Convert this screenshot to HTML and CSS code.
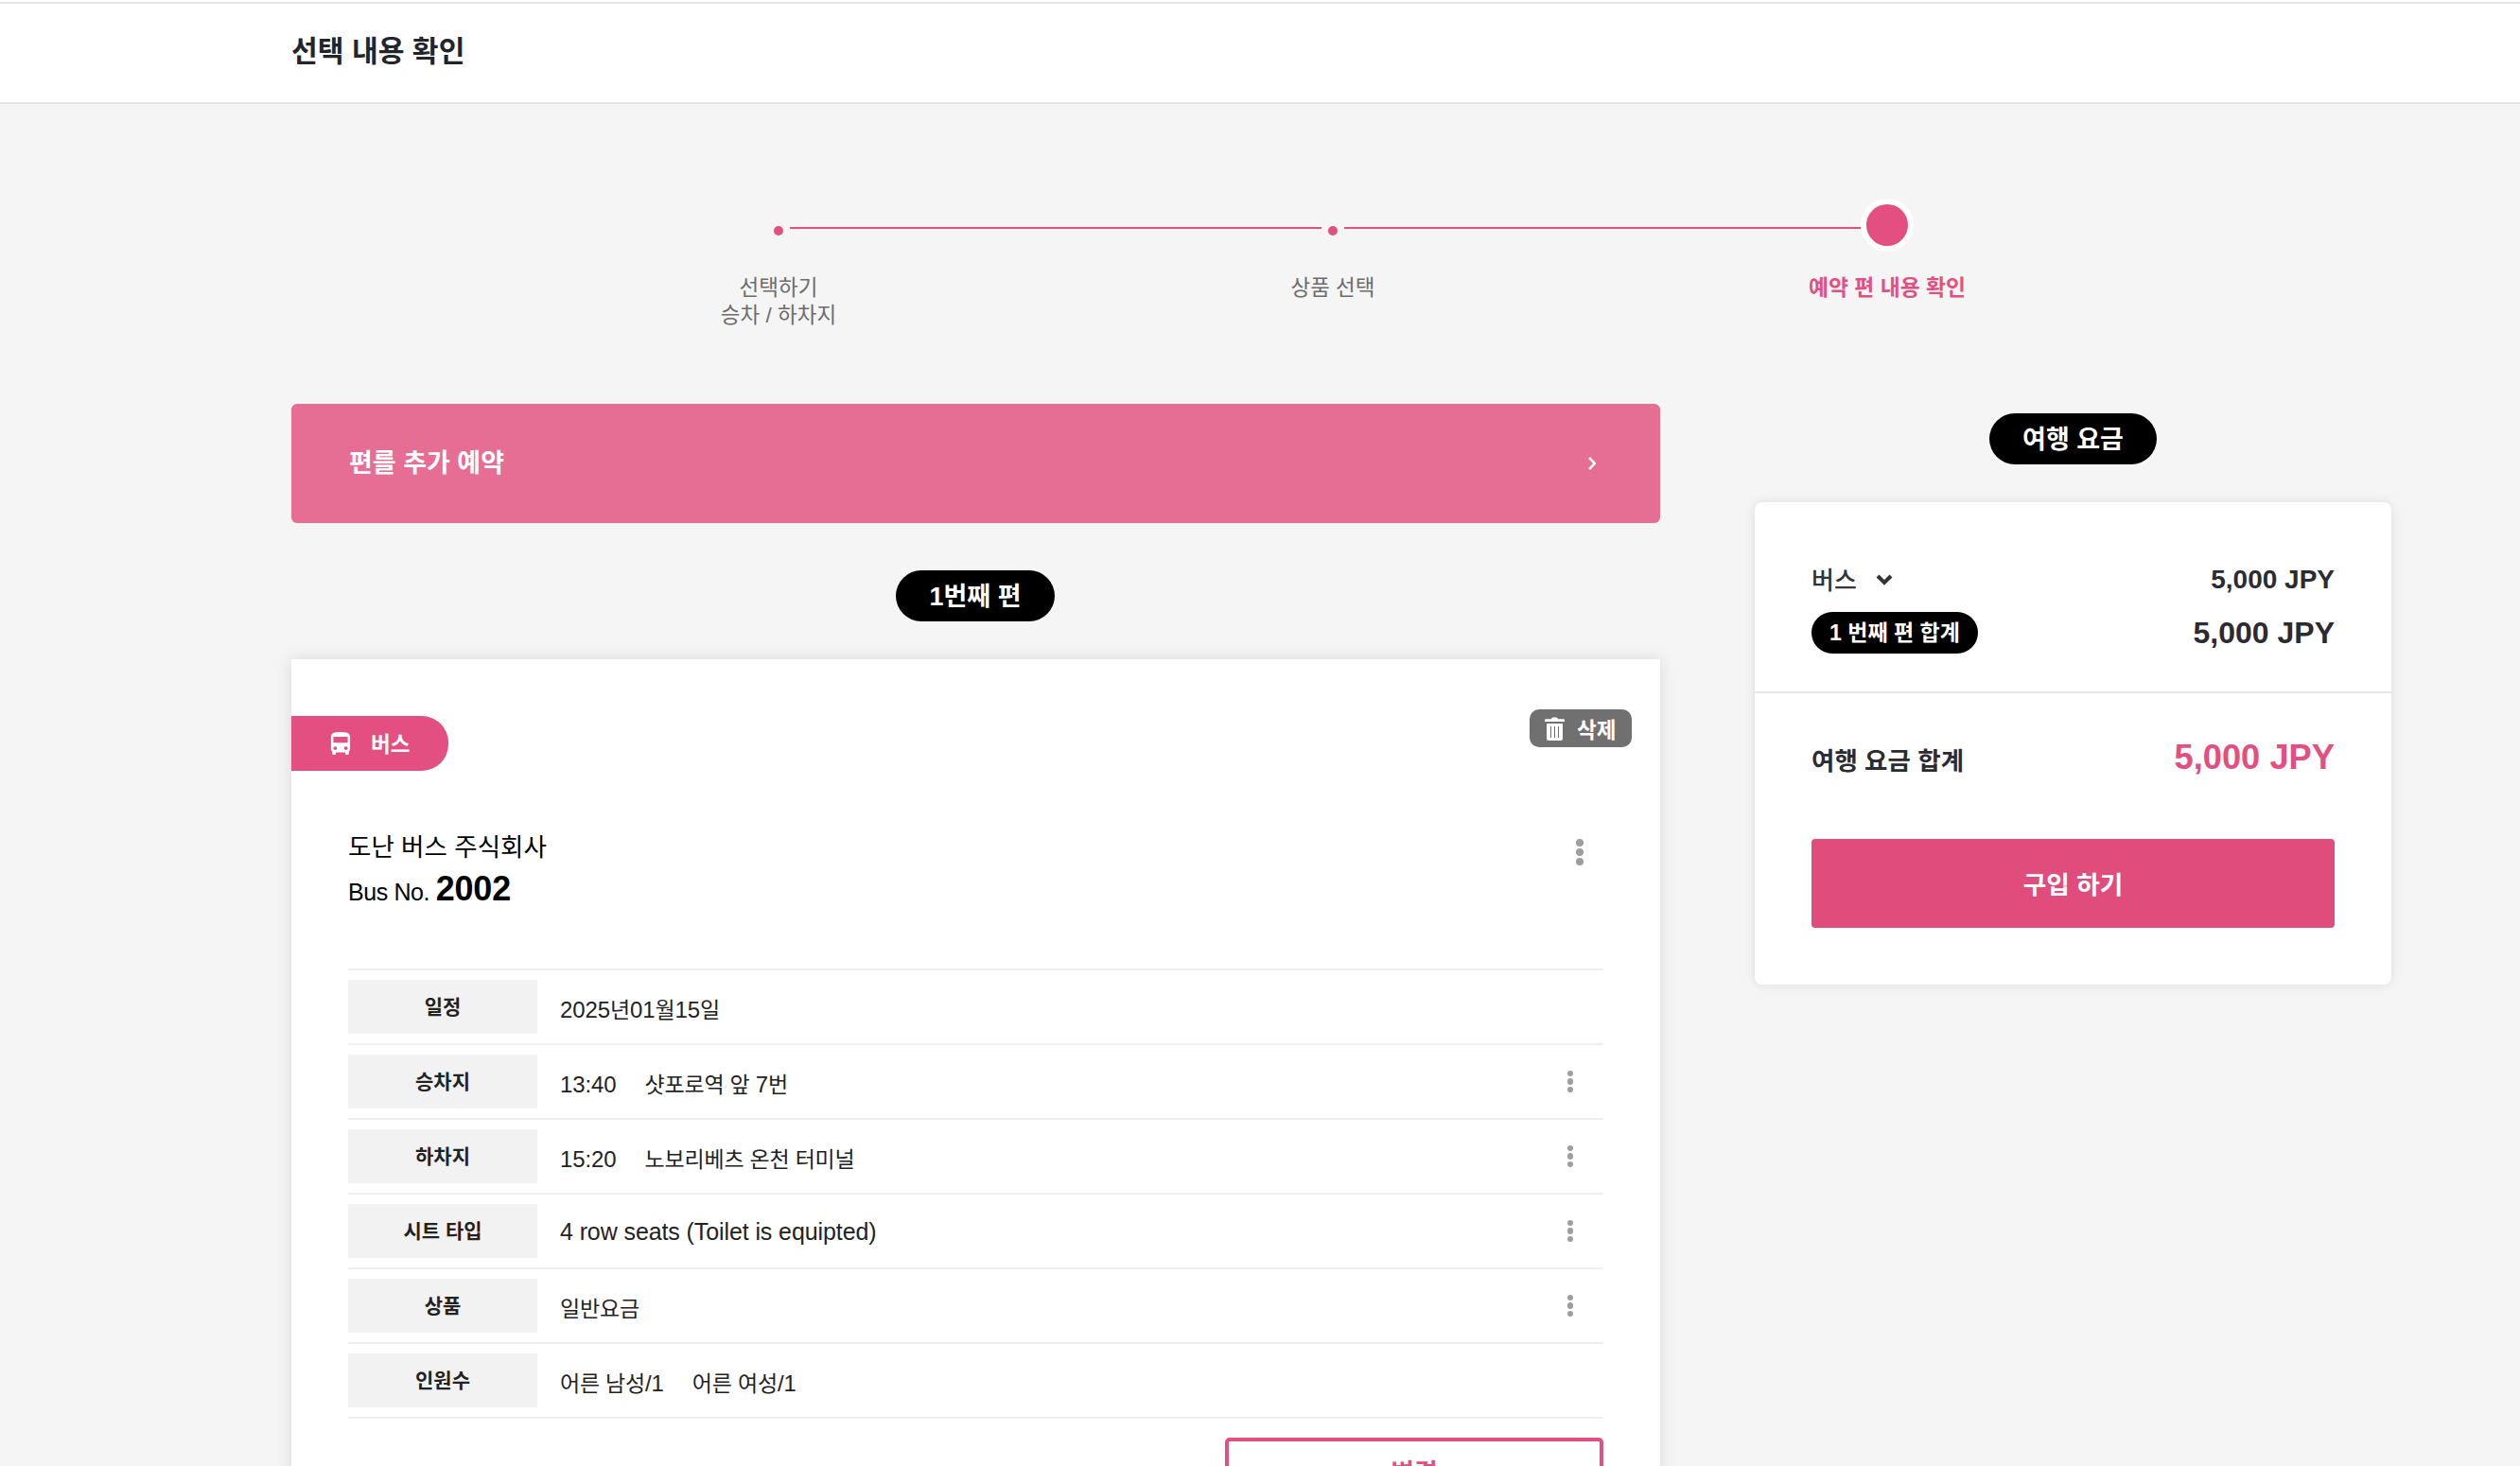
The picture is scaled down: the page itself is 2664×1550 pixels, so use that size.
FILE: index.html
```html
<!DOCTYPE html>
<html lang="ko">
<head>
<meta charset="utf-8">
<title>선택 내용 확인</title>
<link rel="stylesheet" href="styles.css">
</head>
<body>
<header class="topbar">
  <div class="topbar-inner"><h1 class="page-title">선택 내용 확인</h1></div>
</header>

<main class="page">
  <section class="stepper">
    <div class="track">
      <span class="dot"></span><span class="line"></span>
      <span class="dot dot-mid"></span><span class="line line-last"></span>
      <span class="dot-current"></span>
    </div>
    <div class="step-labels">
      <div class="step-label">선택하기<br>승차 / 하차지</div>
      <div class="step-label">상품 선택</div>
      <div class="step-label step-active">예약 편 내용 확인</div>
    </div>
  </section>

  <div class="columns">
    <div class="col-main">
      <a class="add-banner">
        <span>편를 추가 예약</span>
        <svg class="banner-chevron" viewBox="0 0 8 14"><polyline points="1,1 7,7 1,13"/></svg>
      </a>
      <div class="pill pill-section">1번째 편</div>

      <article class="card">
        <button class="delete-btn">
          <svg class="trash" viewBox="0 0 21 25"><path fill-rule="evenodd" d="M7 2.2C7 1 8 .5 10.500 .5S14 1 14 2.200H20a1 1 0 0 1 1 1V5H0V3.200a1 1 0 0 1 1-1ZM2 7H19V23a2 2 0 0 1-2 2H4a2 2 0 0 1-2-2ZM6 10V22H7V10ZM10 10V22H11V10ZM14 10V22H15V10Z"/></svg>
          <span>삭제</span>
        </button>

        <div class="mode-tag">
          <svg class="bus-icon" viewBox="4 2 16 19"><path d="M4 16c0 .88.39 1.670 1 2.220V20c0 .55.45 1 1 1h1c.55 0 1-.45 1-1v-1h8v1c0 .55.45 1 1 1h1c.55 0 1-.45 1-1v-1.780c.61-.55 1-1.340 1-2.220V6c0-3.500-3.580-4-8-4s-8 .5-8 4v10zm3.500 1c-.83 0-1.500-.67-1.500-1.500S6.670 14 7.500 14s1.500.67 1.500 1.500S8.330 17 7.500 17zm9 0c-.83 0-1.500-.67-1.500-1.500s.67-1.500 1.500-1.500 1.500.67 1.500 1.500-.67 1.500-1.500 1.500zm1.500-6H6V6h12v5z"/></svg>
          <span>버스</span>
        </div>

        <div class="operator">
          <div>
            <div class="operator-name">도난 버스 주식회사</div>
            <div class="bus-no">Bus No. <strong>2002</strong></div>
          </div>
          <span class="kebab kebab-large"><i></i><i></i><i></i></span>
        </div>

        <div class="details">
          <div class="row">
            <div class="row-label">일정</div>
            <div class="row-value">2025<span class="ko">년</span>01<span class="ko">월</span>15<span class="ko">일</span></div>
          </div>
          <div class="row">
            <div class="row-label">승차지</div>
            <div class="row-value">13:40<span class="ko gap">샷포로역 앞 </span>7<span class="ko">번</span></div>
            <span class="kebab"><i></i><i></i><i></i></span>
          </div>
          <div class="row">
            <div class="row-label">하차지</div>
            <div class="row-value">15:20<span class="ko gap">노보리베츠 온천 터미널</span></div>
            <span class="kebab"><i></i><i></i><i></i></span>
          </div>
          <div class="row">
            <div class="row-label">시트 타입</div>
            <div class="row-value row-value-latin">4 row seats (Toilet is equipted)</div>
            <span class="kebab"><i></i><i></i><i></i></span>
          </div>
          <div class="row">
            <div class="row-label">상품</div>
            <div class="row-value"><span class="ko">일반요금</span></div>
            <span class="kebab"><i></i><i></i><i></i></span>
          </div>
          <div class="row">
            <div class="row-label">인원수</div>
            <div class="row-value"><span class="ko">어른 남성</span>/1<span class="ko gap">어른 여성</span>/1</div>
          </div>
        </div>

        <div class="card-actions"><button class="change-btn">변경</button></div>
      </article>
    </div>

    <aside class="col-side">
      <div class="pill pill-section pill-fare">여행 요금</div>
      <div class="fare-card">
        <div class="fare-top">
          <div class="fare-row fare-row-first">
            <span class="fare-mode"><span class="fare-mode-name">버스</span><svg class="select-chevron" viewBox="0 0 18 12"><polyline points="2,2 9,9 16,2"/></svg></span>
            <span class="price">5,000 JPY</span>
          </div>
          <div class="fare-row">
            <span class="pill pill-small">1 번째 편 합계</span>
            <span class="price price-sub">5,000 JPY</span>
          </div>
        </div>
        <div class="fare-bottom">
          <div class="fare-row fare-row-total">
            <span class="total-label">여행 요금 합계</span>
            <span class="price price-total">5,000 JPY</span>
          </div>
          <button class="buy-btn">구입 하기</button>
        </div>
      </div>
    </aside>
  </div>
</main>
</body>
</html>
```

FILE: styles.css
```css
* { box-sizing: border-box; }
html, body { margin: 0; padding: 0; }
body {
  width: 2664px;
  height: 1550px;
  overflow: hidden;
  background: #f5f5f5;
  color: #000;
  font-family: "Liberation Sans", "Noto Sans CJK KR", sans-serif;
}
button { font-family: inherit; border: 0; padding: 0; }

/* header */
.topbar { background: #fff; padding-top: 2px; }
.topbar-inner {
  height: 108px;
  border-top: 2px solid #e4e4e4;
  border-bottom: 2px solid #e4e4e4;
  padding: 0 0 2px 308px;
  display: flex;
  align-items: center;
}
.page-title { margin: 0; font-size: 30.200px; font-weight: 700; color: #23252d; line-height: 40px; }

/* page frame */
.page { padding: 100px 136px 0 308px; }

/* stepper */
.stepper { margin-left: 222px; width: 1758px; }
.track { display: flex; align-items: flex-start; height: 56px; padding-left: 288px; }
.dot { width: 10px; height: 10px; margin-top: 29px; border-radius: 50%; background: #e34f80; flex: none; }
.dot-mid { margin-left: 7px; }
.line { width: 562px; height: 2px; margin: 30px 0 0 7px; background: #e34f80; flex: none; }
.line-last { width: 546px; }
.dot-current {
  width: 56px; height: 56px; flex: none;
  border-radius: 50%;
  border: 6px solid #fff;
  background: #e34f80;
}
.step-labels { display: flex; margin-top: 24px; margin-bottom: 79px; }
.step-label { width: 586px; text-align: center; font-size: 22.500px; line-height: 29px; color: #6c6c6c; min-height: 58px; }
.step-active { color: #e34f80; font-weight: 700; font-size: 22.800px; }

/* columns */
.columns { display: grid; grid-template-columns: 1447px 673px; column-gap: 100px; align-items: start; }
.col-main { display: flex; flex-direction: column; align-items: center; }
.col-side { display: flex; flex-direction: column; align-items: center; padding-top: 10px; }

.add-banner {
  align-self: stretch;
  height: 126px;
  border-radius: 6px;
  background: #e66e95;
  color: #fff;
  font-size: 27px;
  font-weight: 700;
  line-height: 36px;
  display: flex;
  align-items: center;
  justify-content: space-between;
  padding: 0 68px 0 61px;
  margin-bottom: 50px;
}
.add-banner span { margin-top: -1px; }
.banner-chevron { width: 8px; height: 14px; margin-top: -1px; fill: none; stroke: #fff; stroke-width: 2.500; }

.pill {
  display: inline-flex;
  align-items: center;
  justify-content: center;
  background: #000;
  color: #fff;
  font-weight: 700;
  border-radius: 999px;
  white-space: nowrap;
}
.pill-section { width: 168px; height: 54px; font-size: 27px; line-height: 50px; padding-top: 2px; margin-bottom: 40px; margin-left: -1px; }
.pill-fare { width: 177px; margin-left: 0; }
.pill-small { width: 176px; height: 44px; font-size: 23px; line-height: 40px; }

/* left card */
.card {
  position: relative;
  align-self: stretch;
  background: #fff;
  box-shadow: 0 0 16px rgba(0, 0, 0, .12);
  padding: 60px;
}
.delete-btn {
  position: absolute;
  top: 53px;
  right: 30px;
  width: 108px;
  height: 40px;
  border-radius: 10px;
  background: #707070;
  color: #fff;
  font-size: 22.500px;
  font-weight: 700;
  display: flex;
  align-items: center;
  gap: 13px;
  padding-left: 16px;
}
.delete-btn span { margin-top: -1px; }
.trash { width: 21px; height: 25px; fill: #fff; }

.mode-tag {
  width: 166px;
  height: 58px;
  margin-left: -60px;
  background: #e34f80;
  color: #fff;
  border-radius: 0 28px 28px 0;
  display: flex;
  align-items: center;
  gap: 20px;
  padding-left: 40px;
  font-size: 22.500px;
  font-weight: 700;
}
.mode-tag span { margin-top: -2px; }
.bus-icon { width: 24px; height: 24px; fill: #fff; }

.operator { display: flex; justify-content: space-between; align-items: flex-start; margin-top: 61px; }
.operator-name { font-size: 26.500px; line-height: 40px; }
.bus-no { font-size: 25px; line-height: 48px; letter-spacing: -.4px; }
.bus-no strong { font-size: 36px; letter-spacing: -.2px; }

.kebab { display: flex; flex-direction: column; gap: 2px; flex: none; }
.kebab i { display: block; width: 6.500px; height: 6.500px; border-radius: 50%; background: #9e9e9e; }
.kebab-large { margin: 11px 21.500px 0 0; }
.kebab-large i { width: 8px; height: 8px; }
.row .kebab { margin: 0 32px 0 auto; }

.details { margin-top: 57px; border-bottom: 2px solid #efefef; }
.row {
  display: flex;
  align-items: center;
  height: 79px;
  padding: 10px 0;
  border-top: 2px solid #efefef;
}
.row-label {
  width: 200px;
  height: 57px;
  flex: none;
  display: flex;
  align-items: center;
  justify-content: center;
  padding-bottom: 4px;
  background: #f2f2f2;
  color: #222;
  font-size: 21px;
  font-weight: 700;
}
.row-value { margin: 2px 0 0 24px; font-size: 24px; color: #222; letter-spacing: -.1px; white-space: nowrap; }
.row-value-latin { font-size: 25px; }
.ko { font-size: 23px; letter-spacing: -.2px; }
.gap { margin-left: 30px; }

.card-actions { display: flex; justify-content: flex-end; margin-top: 20px; }
.change-btn {
  width: 400px;
  height: 70px;
  background: #fff;
  border: 4px solid #e34f80;
  border-radius: 5px;
  color: #e34f80;
  font-size: 27px;
  font-weight: 700;
}

/* fare card */
.fare-card {
  width: 100%;
  background: #fff;
  border-radius: 8px;
  box-shadow: 0 0 12px rgba(0, 0, 0, .1);
}
.fare-top { padding: 58px 60px 0; border-bottom: 2px solid #e8e8e8; height: 202px; }
.fare-bottom { padding: 46px 60px 60px; }
.fare-row { display: flex; justify-content: space-between; align-items: center; }
.fare-row-first { height: 48px; margin-bottom: 10px; }
.fare-mode { font-size: 26px; font-weight: 500; color: #333; display: inline-flex; align-items: center; gap: 20px; }
.fare-mode-name { margin-top: -3px; }
.select-chevron { width: 18px; height: 12px; fill: none; stroke: #333; stroke-width: 4; }
.price { font-size: 28px; font-weight: 700; color: #2a2b33; }
.price-sub { font-size: 32px; }
.price-total { font-size: 36.300px; color: #e34f80; }
.fare-row-total { height: 44px; }
.total-label { font-size: 26.500px; font-weight: 700; color: #2a2b33; margin-top: 2px; }
.buy-btn {
  display: block;
  width: 100%;
  height: 94px;
  margin-top: 64px;
  padding-bottom: 2px;
  border-radius: 4px;
  background: #e04d7d;
  color: #fff;
  font-size: 26.700px;
  font-weight: 700;
}
```
